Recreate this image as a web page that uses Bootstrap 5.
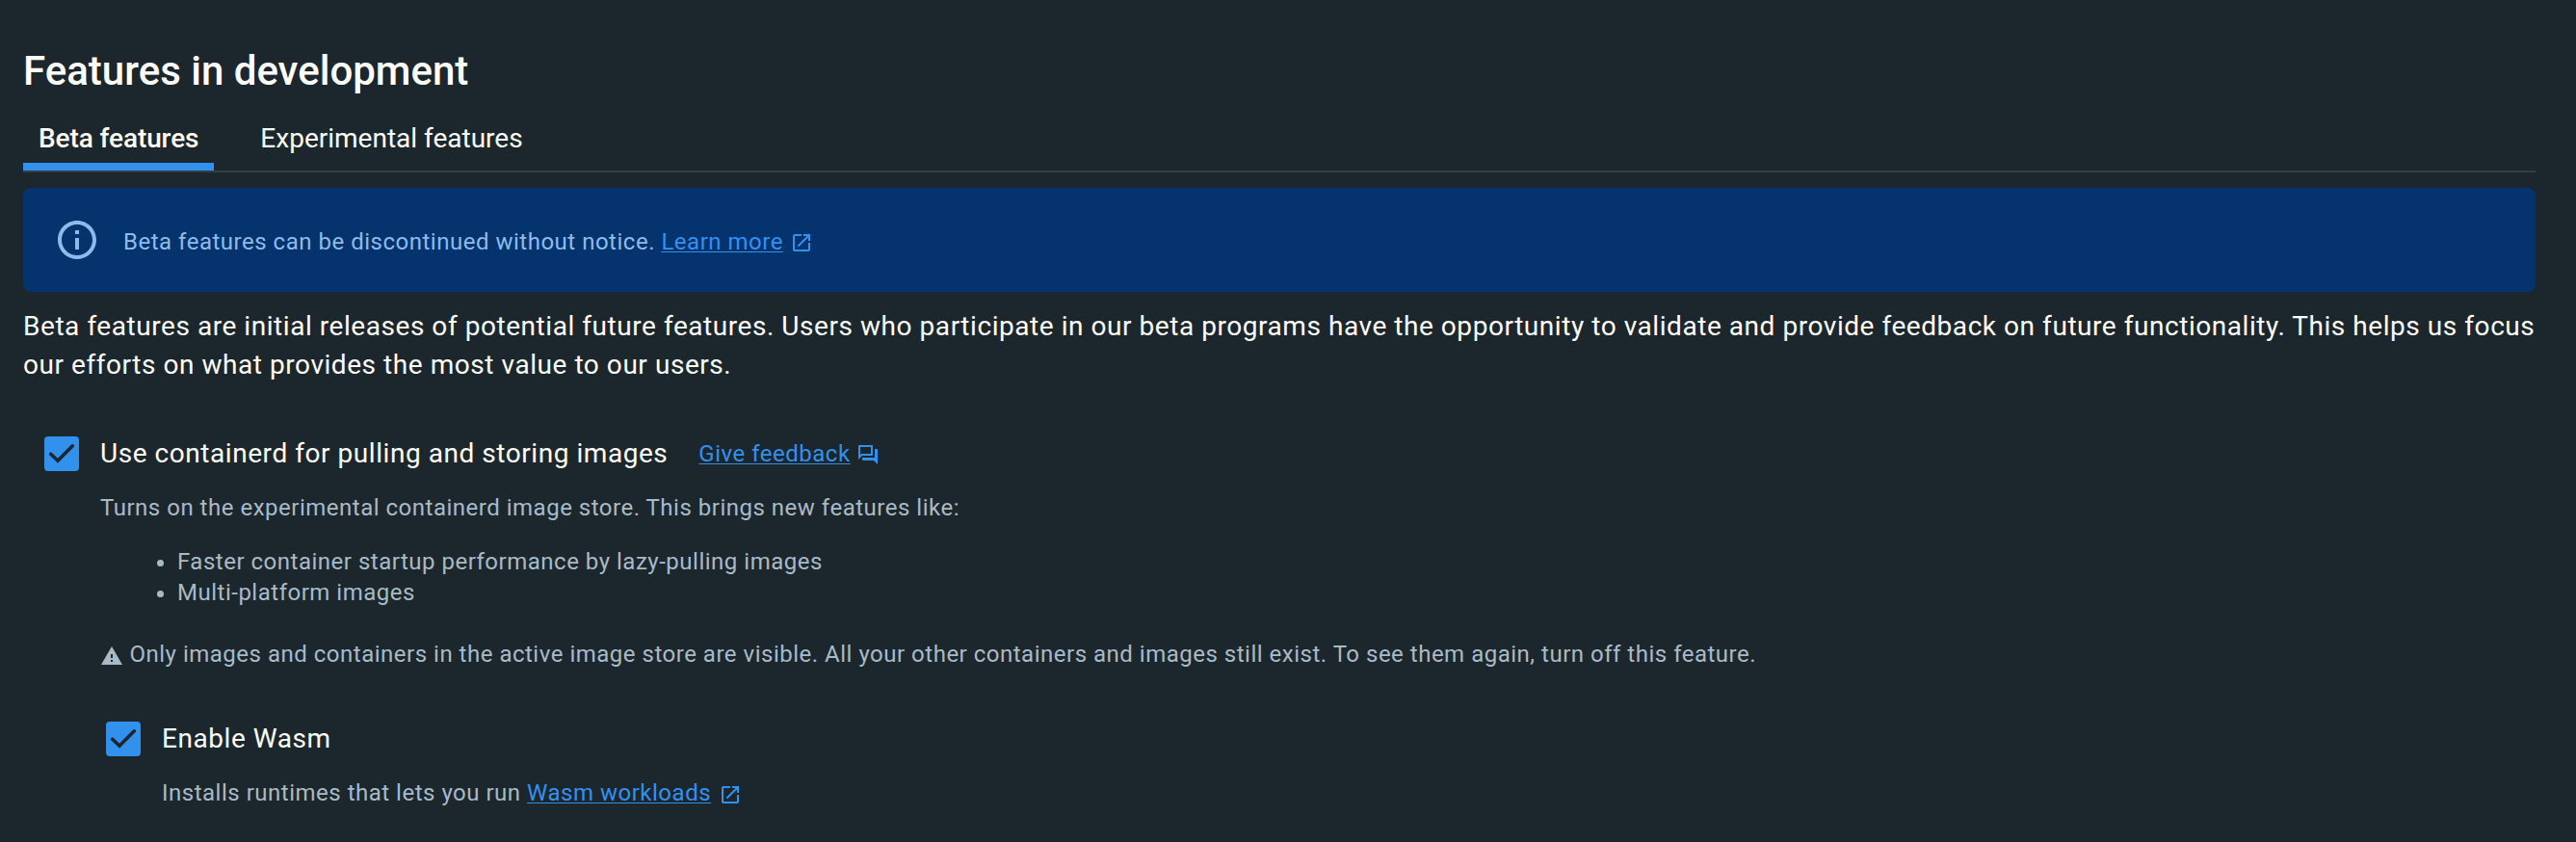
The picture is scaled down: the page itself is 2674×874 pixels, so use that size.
<!DOCTYPE html>
<html lang="en" data-bs-theme="dark">
<head>
<meta charset="utf-8">
<meta name="viewport" content="width=device-width, initial-scale=1">
<title>Features in development</title>
<link href="https://cdn.jsdelivr.net/npm/bootstrap@5.3.0/dist/css/bootstrap.min.css" rel="stylesheet">
<style>
  body { font-family: Roboto, "Liberation Sans", sans-serif; background: #1c272d; color: #fff; font-size: 28px; line-height: 40px; overflow: hidden; }
  .settings { padding: 48px 42px 0 24px; }
  .page-title { font-size: 42px; font-weight: 500; line-height: 52px; }
  .tab-bar { height: 67px; margin-top: 12px; gap: 32px; border-bottom: 2px solid #333d43; }
  .tab-bar .nav-link { border: 0; border-radius: 0; color: #fff; font-size: 28px; line-height: 40px; padding: 12px 16px 0; height: 65px; }
  .tab-bar .nav-link.active { font-weight: 500; letter-spacing: -.1px; border-bottom: 8px solid #3391ee; }
  .notice { height: 108px; margin: 16px 0; padding: 0 32px; gap: 24px; background: #05336d; color: #8dbcec; border: 0; border-radius: 8px; font-size: 24px; line-height: 32px; letter-spacing: .51px; }
  .notice-text { padding-top: 3px; }
  .intro { letter-spacing: .55px; margin-right: -10px; }
  .option { letter-spacing: .55px; }
  .accent { color: #3391ee; font-size: 24px; letter-spacing: .51px; text-decoration-thickness: 1px; text-underline-offset: 2px; }
  .glyph { width: 24px; height: 24px; vertical-align: -6px; fill: currentColor; }
  .glyph-link { color: #3391ee; margin-left: 1px; }
  .notice .glyph, .option .glyph { vertical-align: -5px; }
  .option .glyph { margin-left: -1px; }
  .option { gap: 22px; height: 40px; }
  .option-main { margin: 52px 0 20px 22px; }
  .option-sub { margin: 52px 0 20px 6px; }
  .option-link { margin: -2px 0 0 10px; }
  .tick { width: 36px; height: 36px; flex: none; }
  .detail { margin-left: 80px; font-size: 24px; line-height: 32px; letter-spacing: .507px; color: #a9bac7; }
  .detail ul { padding-left: 80px; margin: 24px 0 32px; }
  .sub-detail { margin-left: 64px; }
  .option span { color: #fff; font-size: 28px; line-height: 40px; }
</style>
</head>
<body>
<svg class="d-none">
  <symbol id="open" viewBox="0 0 24 24"><path d="M19 19H5V5h7V3H5c-1.11 0-2 .9-2 2v14c0 1.1.89 2 2 2h14c1.1 0 2-.9 2-2v-7h-2v7zM14 3v2h3.59l-9.83 9.83 1.41 1.41L19 6.41V10h2V3h-7z"/></symbol>
  <symbol id="check" viewBox="0 0 36 36"><rect width="36" height="36" rx="4" fill="#3391ee"/><path d="M6.7 18.2 14 25.2 29.3 9.8" fill="none" stroke="#1c272d" stroke-width="3.6" stroke-linecap="round"/></symbol>
</svg>
<main class="settings">
  <h1 class="page-title mb-0">Features in development</h1>
  <nav class="nav tab-bar">
    <a class="nav-link active" href="#">Beta features</a>
    <a class="nav-link" href="#">Experimental features</a>
  </nav>
  <div class="alert notice d-flex align-items-center" role="alert">
    <svg width="48" height="48" viewBox="0 0 24 24" fill="currentColor"><path d="M11 7h2v2h-2zm0 4h2v6h-2zm1-9C6.480 2 2 6.480 2 12s4.480 10 10 10 10-4.480 10-10S17.520 2 12 2zm0 18c-4.410 0-8-3.590-8-8s3.590-8 8-8 8 3.590 8 8-3.590 8-8 8z"/></svg>
    <div class="notice-text">Beta features can be discontinued without notice. <a class="accent" href="#">Learn more</a> <svg class="glyph glyph-link"><use href="#open"/></svg></div>
  </div>
  <p class="intro mb-0">Beta features are initial releases of potential future features. Users who participate in our beta programs have the opportunity to validate and provide feedback on future functionality. This helps us focus our efforts on what provides the most value to our users.</p>

  <section>
    <div class="option option-main d-flex align-items-center">
      <svg class="tick" role="checkbox" aria-checked="true"><use href="#check"/></svg>
      <span>Use containerd for pulling and storing images</span>
      <div class="option-link"><a class="accent" href="#">Give feedback</a> <svg class="glyph glyph-link" viewBox="0 0 24 24"><path d="M15 4v7H5.170L4 12.170V4h11m1-2H3c-.55 0-1 .45-1 1v14l4-4h10c.55 0 1-.45 1-1V3c0-.55-.45-1-1-1zm5 4h-2v9H6v2c0 .55.45 1 1 1h11l4 4V7c0-.55-.45-1-1-1z"/></svg></div>
    </div>
    <div class="detail">
      <p class="mb-0">Turns on the experimental containerd image store. This brings new features like:</p>
      <ul>
        <li>Faster container startup performance by lazy-pulling images</li>
        <li>Multi-platform images</li>
      </ul>
      <p class="mb-0"><svg class="glyph" viewBox="0 0 24 24"><path d="M1 21h22L12 2 1 21zm12-3h-2v-2h2v2zm0-4h-2v-4h2v4z"/></svg> Only images and containers in the active image store are visible. All your other containers and images still exist. To see them again, turn off this feature.</p>
      <div class="option option-sub d-flex align-items-center">
        <svg class="tick" role="checkbox" aria-checked="true"><use href="#check"/></svg>
        <span>Enable Wasm</span>
      </div>
      <p class="sub-detail mb-0">Installs runtimes that lets you run <a class="accent" href="#">Wasm workloads</a> <svg class="glyph glyph-link"><use href="#open"/></svg></p>
    </div>
  </section>
</main>
<script src="https://cdn.jsdelivr.net/npm/bootstrap@5.3.0/dist/js/bootstrap.bundle.min.js"></script>
</body>
</html>
